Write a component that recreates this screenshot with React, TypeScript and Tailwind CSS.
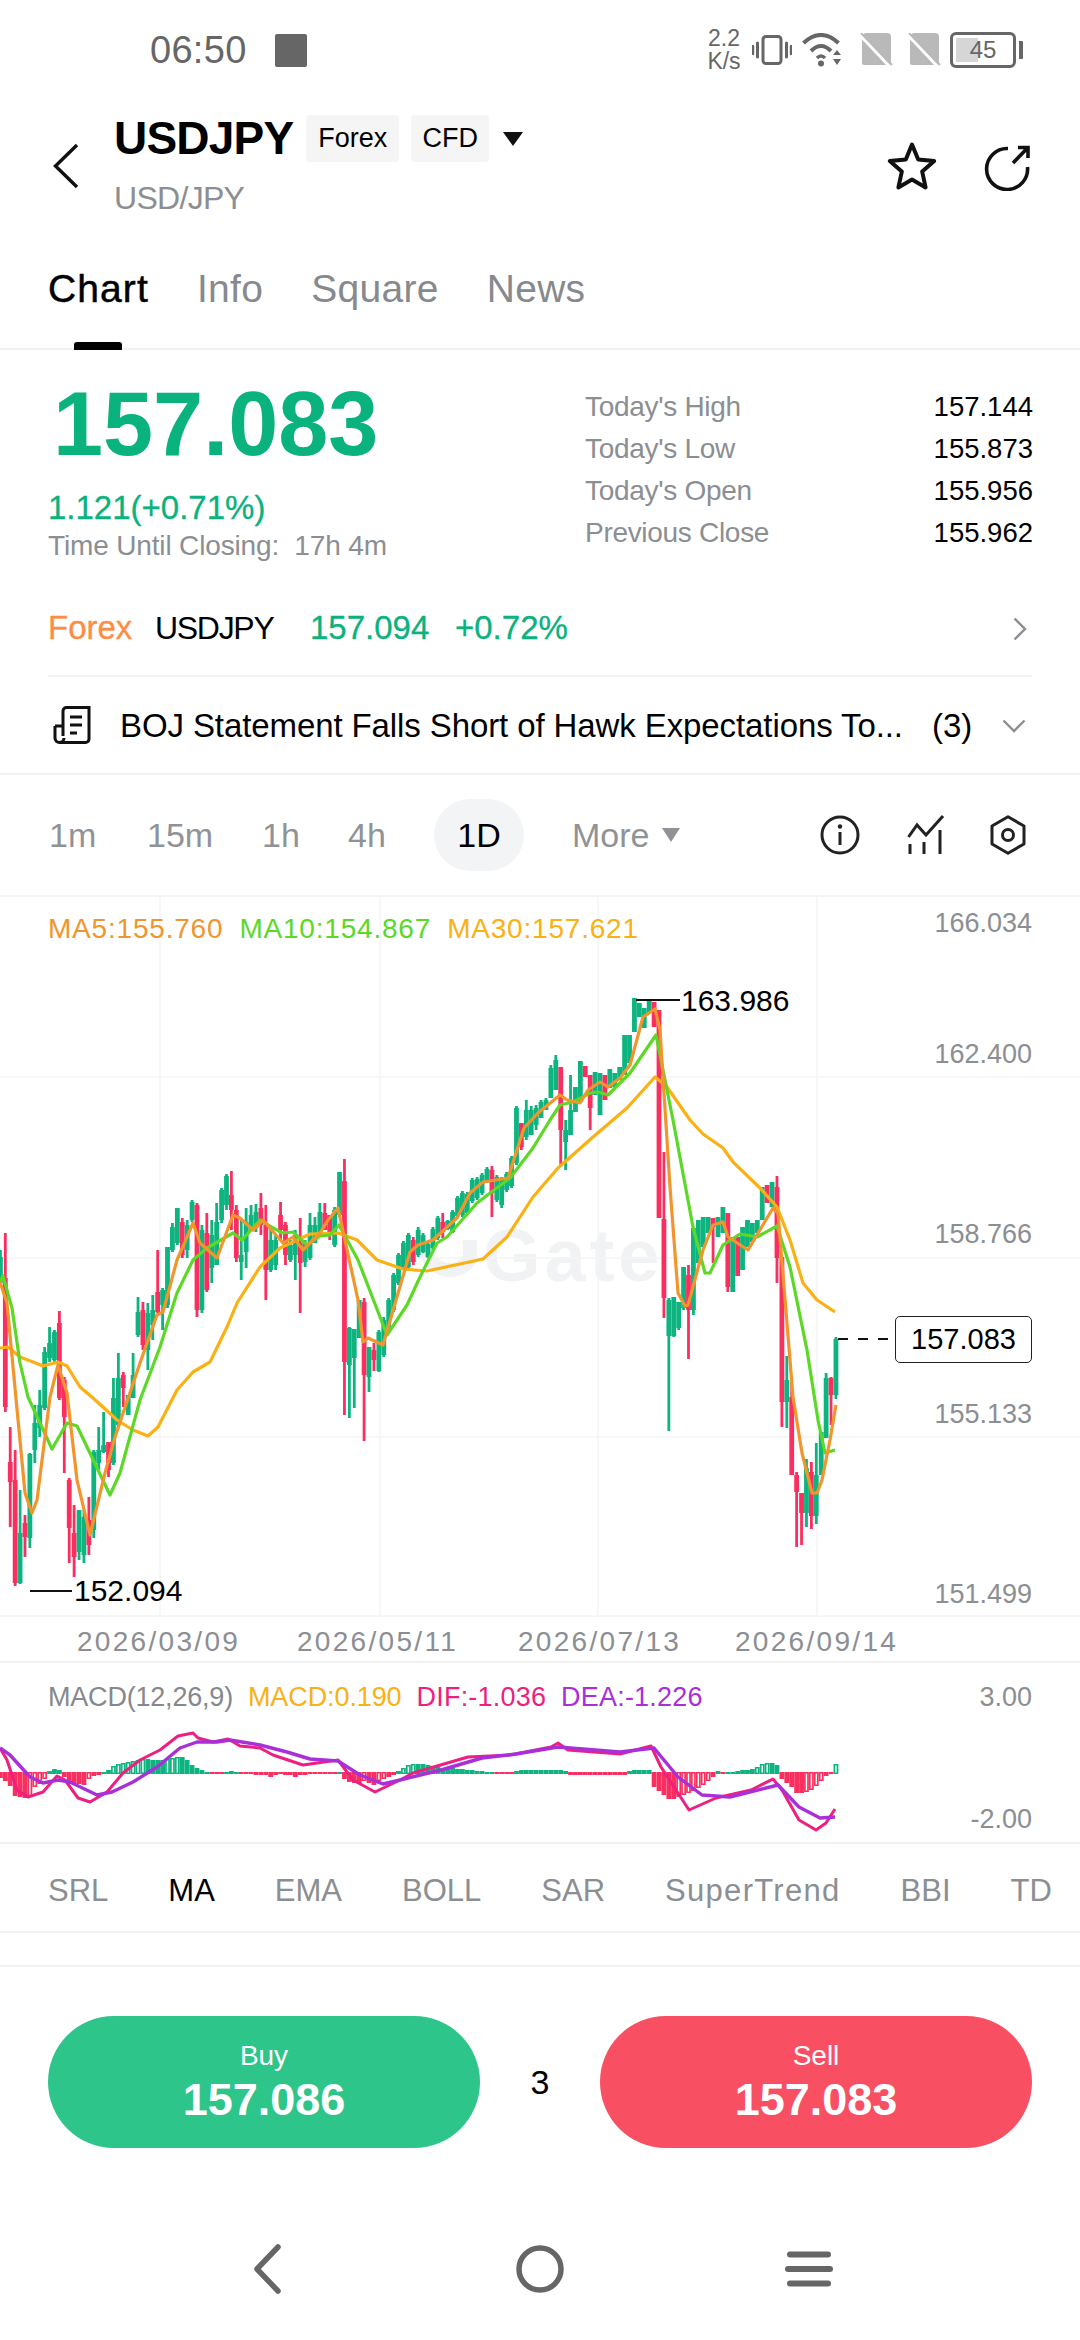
import { Fragment } from "react";

type Candle = [number, number, number, number, "g" | "r"];
type Pt = [number, number];

// traced candles: high, body top, body bottom, low, colour (page px)
const candles: Candle[] = [
  [1250, 1257, 1283, 1285, "g"], [1233, 1278, 1407, 1412, "r"], [1427, 1462, 1482, 1527, "r"], [1450, 1480, 1583, 1586, "r"],
  [1490, 1533, 1583, 1584, "g"], [1515, 1523, 1537, 1557, "r"], [1453, 1454, 1538, 1548, "g"], [1405, 1423, 1450, 1463, "g"],
  [1390, 1405, 1428, 1437, "g"], [1347, 1352, 1408, 1410, "g"], [1327, 1343, 1358, 1362, "g"], [1330, 1332, 1360, 1362, "g"],
  [1311, 1323, 1398, 1400, "r"], [1377, 1380, 1417, 1473, "r"], [1478, 1480, 1528, 1563, "r"], [1505, 1533, 1557, 1577, "r"],
  [1510, 1510, 1552, 1560, "g"], [1510, 1517, 1555, 1563, "g"], [1497, 1520, 1545, 1555, "r"], [1450, 1452, 1530, 1538, "g"],
  [1427, 1450, 1463, 1470, "g"], [1412, 1445, 1452, 1453, "g"], [1442, 1442, 1470, 1477, "r"], [1378, 1398, 1463, 1465, "g"],
  [1353, 1378, 1425, 1427, "g"], [1372, 1375, 1388, 1407, "r"], [1395, 1395, 1415, 1415, "g"], [1353, 1375, 1398, 1398, "g"],
  [1297, 1312, 1335, 1337, "g"], [1302, 1310, 1345, 1350, "r"], [1303, 1313, 1350, 1370, "g"], [1295, 1310, 1325, 1340, "g"],
  [1250, 1292, 1312, 1313, "r"], [1288, 1290, 1305, 1330, "g"], [1247, 1247, 1305, 1308, "g"], [1223, 1227, 1250, 1252, "g"],
  [1208, 1208, 1243, 1245, "g"], [1218, 1222, 1255, 1258, "r"], [1220, 1225, 1250, 1258, "g"], [1200, 1202, 1220, 1222, "g"],
  [1203, 1205, 1310, 1317, "r"], [1225, 1230, 1310, 1313, "g"], [1213, 1233, 1290, 1292, "r"], [1220, 1235, 1268, 1283, "g"],
  [1203, 1222, 1265, 1265, "g"], [1188, 1190, 1220, 1223, "g"], [1174, 1176, 1205, 1210, "g"], [1171, 1195, 1210, 1230, "r"],
  [1205, 1210, 1258, 1262, "r"], [1220, 1255, 1262, 1280, "g"], [1208, 1222, 1252, 1268, "g"], [1205, 1215, 1230, 1230, "g"],
  [1204, 1212, 1228, 1232, "g"], [1193, 1208, 1225, 1235, "r"], [1205, 1225, 1270, 1300, "r"], [1227, 1240, 1270, 1272, "g"],
  [1235, 1240, 1265, 1270, "g"], [1202, 1215, 1230, 1240, "r"], [1222, 1225, 1255, 1265, "r"], [1240, 1245, 1260, 1262, "g"],
  [1230, 1235, 1255, 1280, "g"], [1218, 1243, 1263, 1313, "r"], [1240, 1243, 1262, 1267, "g"], [1213, 1225, 1258, 1260, "g"],
  [1217, 1225, 1243, 1243, "g"], [1203, 1212, 1232, 1232, "g"], [1203, 1213, 1230, 1230, "r"], [1215, 1215, 1235, 1240, "r"],
  [1207, 1210, 1245, 1247, "g"], [1172, 1172, 1215, 1217, "g"], [1159, 1181, 1362, 1415, "r"], [1327, 1328, 1365, 1418, "g"],
  [1329, 1329, 1358, 1408, "g"], [1300, 1300, 1338, 1338, "g"], [1298, 1302, 1375, 1441, "r"], [1347, 1347, 1377, 1392, "g"],
  [1343, 1350, 1360, 1371, "r"], [1330, 1332, 1371, 1372, "g"], [1317, 1320, 1355, 1357, "g"], [1298, 1300, 1330, 1332, "g"],
  [1273, 1275, 1310, 1312, "g"], [1253, 1255, 1283, 1285, "g"], [1241, 1243, 1268, 1270, "g"], [1233, 1235, 1267, 1268, "g"],
  [1237, 1240, 1262, 1265, "r"], [1227, 1230, 1255, 1257, "g"], [1233, 1235, 1252, 1253, "g"], [1243, 1244, 1257, 1258, "g"],
  [1227, 1229, 1248, 1250, "g"], [1216, 1218, 1238, 1240, "g"], [1213, 1222, 1232, 1238, "r"], [1220, 1221, 1229, 1230, "g"],
  [1210, 1212, 1232, 1233, "g"], [1196, 1198, 1216, 1218, "g"], [1191, 1193, 1215, 1217, "g"], [1192, 1194, 1213, 1215, "g"],
  [1178, 1180, 1201, 1203, "g"], [1177, 1179, 1198, 1200, "g"], [1173, 1175, 1193, 1195, "g"], [1167, 1169, 1181, 1183, "g"],
  [1166, 1170, 1193, 1217, "r"], [1175, 1177, 1200, 1202, "g"], [1177, 1179, 1205, 1208, "g"], [1172, 1174, 1190, 1192, "g"],
  [1156, 1158, 1186, 1188, "g"], [1106, 1108, 1163, 1165, "g"], [1123, 1123, 1147, 1150, "r"], [1100, 1110, 1137, 1140, "g"],
  [1106, 1110, 1135, 1135, "g"], [1105, 1108, 1125, 1130, "g"], [1100, 1102, 1118, 1118, "g"], [1098, 1100, 1110, 1110, "g"],
  [1065, 1068, 1098, 1098, "g"], [1055, 1060, 1090, 1090, "g"], [1067, 1067, 1130, 1167, "r"], [1120, 1130, 1142, 1170, "g"],
  [1075, 1110, 1135, 1135, "g"], [1087, 1087, 1112, 1112, "g"], [1061, 1061, 1102, 1102, "g"], [1066, 1066, 1077, 1077, "r"],
  [1075, 1075, 1108, 1130, "r"], [1072, 1072, 1095, 1095, "g"], [1073, 1073, 1115, 1115, "g"], [1075, 1075, 1100, 1100, "r"],
  [1069, 1069, 1088, 1088, "g"], [1073, 1073, 1087, 1087, "g"], [1067, 1067, 1080, 1080, "g"], [1035, 1035, 1075, 1075, "g"],
  [1035, 1035, 1063, 1063, "g"], [998, 998, 1032, 1032, "g"], [1003, 1003, 1017, 1017, "g"], [1008, 1008, 1028, 1028, "g"],
  [1000, 1000, 1013, 1013, "g"], [1002, 1002, 1027, 1027, "r"], [1010, 1010, 1218, 1218, "r"], [1152, 1219, 1298, 1318, "r"],
  [1298, 1300, 1336, 1431, "g"], [1297, 1297, 1336, 1337, "g"], [1302, 1302, 1328, 1330, "g"], [1267, 1267, 1308, 1310, "g"],
  [1265, 1275, 1310, 1359, "r"], [1228, 1228, 1310, 1315, "g"], [1220, 1220, 1263, 1263, "g"], [1217, 1217, 1247, 1247, "g"],
  [1217, 1217, 1233, 1233, "g"], [1218, 1218, 1227, 1263, "r"], [1217, 1217, 1237, 1237, "g"], [1207, 1207, 1233, 1233, "g"],
  [1213, 1213, 1287, 1292, "r"], [1237, 1237, 1292, 1292, "g"], [1237, 1237, 1276, 1276, "r"], [1227, 1227, 1270, 1270, "g"],
  [1220, 1220, 1247, 1247, "g"], [1223, 1223, 1242, 1242, "g"], [1220, 1220, 1233, 1233, "g"], [1187, 1187, 1220, 1220, "g"],
  [1185, 1185, 1203, 1203, "r"], [1182, 1182, 1207, 1207, "g"], [1176, 1187, 1258, 1283, "r"], [1257, 1257, 1402, 1427, "r"],
  [1356, 1380, 1402, 1428, "g"], [1379, 1397, 1475, 1475, "r"], [1472, 1475, 1492, 1547, "r"], [1493, 1493, 1513, 1545, "r"],
  [1459, 1468, 1513, 1527, "g"], [1462, 1472, 1516, 1529, "r"], [1443, 1475, 1516, 1524, "g"], [1432, 1432, 1475, 1475, "g"],
  [1373, 1378, 1438, 1438, "g"], [1377, 1378, 1395, 1425, "r"], [1337, 1339, 1395, 1399, "g"],
];

const ma30: Pt[] = [[0,1348],[8,1347],[20,1357],[33,1362],[43,1366],[58,1362],[67,1366],[80,1387],[93,1398],[103,1407],[117,1420],[133,1430],[148,1436],[158,1427],[177,1390],[193,1372],[210,1362],[227,1327],[237,1303],[260,1267],[280,1248],[310,1234],[338,1233],[357,1240],[377,1260],[403,1269],[427,1271],[483,1259],[507,1237],[533,1197],[558,1168],[593,1137],[627,1108],[655,1077],[667,1087],[690,1120],[703,1134],[723,1148],[733,1162],[760,1188],[777,1207],[790,1240],[803,1283],[817,1300],[835,1312]];
const ma10: Pt[] = [[0,1282],[3,1276],[12,1308],[20,1363],[28,1397],[52,1449],[67,1423],[77,1426],[110,1495],[120,1473],[140,1400],[160,1347],[177,1293],[193,1260],[207,1248],[233,1233],[242,1240],[260,1220],[270,1226],[282,1233],[293,1232],[307,1245],[320,1236],[330,1235],[339,1225],[358,1260],[387,1335],[407,1305],[420,1277],[437,1243],[447,1237],[477,1203],[510,1178],[533,1148],[550,1120],[560,1105],[573,1102],[590,1093],[598,1092],[608,1095],[630,1073],[656,1035],[673,1120],[693,1227],[705,1273],[710,1273],[723,1245],[740,1234],[757,1237],[777,1226],[790,1267],[807,1350],[818,1420],[825,1453],[835,1450]];
const ma5: Pt[] = [[0,1282],[7,1303],[13,1367],[25,1493],[32,1513],[37,1500],[50,1397],[58,1365],[67,1393],[77,1480],[90,1535],[105,1473],[115,1437],[140,1363],[157,1315],[163,1312],[177,1260],[193,1223],[200,1243],[217,1258],[233,1215],[240,1218],[253,1230],[263,1220],[283,1243],[293,1237],[303,1250],[320,1233],[328,1220],[338,1208],[358,1300],[363,1342],[368,1338],[383,1345],[410,1252],[418,1245],[433,1240],[457,1218],[470,1193],[483,1182],[508,1178],[524,1128],[538,1113],[560,1095],[567,1100],[580,1103],[588,1090],[600,1082],[608,1087],[620,1078],[630,1065],[643,1017],[655,1009],[660,1030],[670,1187],[678,1293],[685,1306],[688,1305],[703,1250],[713,1225],[723,1222],[728,1237],[748,1250],[773,1208],[778,1213],[793,1397],[802,1453],[812,1493],[817,1493],[822,1480],[830,1440],[836,1405]];

const dif: Pt[] = [[0,1748],[7,1760],[17,1790],[28,1797],[43,1792],[57,1776],[65,1780],[78,1798],[90,1802],[107,1792],[123,1773],[140,1760],[160,1750],[178,1736],[193,1733],[198,1738],[213,1742],[228,1739],[240,1746],[260,1748],[273,1755],[303,1765],[338,1760],[353,1780],[375,1792],[400,1780],[413,1773],[468,1757],[510,1755],[551,1747],[558,1743],[568,1750],[620,1754],[651,1746],[661,1767],[689,1810],[716,1798],[751,1790],[773,1779],[782,1790],[799,1820],[816,1830],[826,1823],[835,1809]];
const dea: Pt[] = [[0,1748],[10,1755],[30,1777],[43,1783],[58,1780],[70,1782],[97,1795],[112,1792],[133,1782],[157,1767],[180,1748],[197,1742],[217,1742],[230,1740],[260,1745],[287,1752],[310,1759],[338,1761],[360,1775],[383,1784],[400,1780],[441,1770],[482,1758],[516,1754],[558,1747],[620,1752],[654,1748],[678,1777],[702,1795],[730,1797],[778,1785],[799,1807],[820,1818],[835,1817]];

// histogram height per candle, up is green and down is red
const hist: number[] = [-5,-8,-13,-23,-24,-25,-24,-14,-11,-6,2,4,3,-4,-11,-11,-11,-12,-6,-3,-2,1,3,7,9,10,11,12,13,14,14,13,13,13,14,15,16,16,13,8,5,3,1,-1,-1,-1,1,2,1,-1,-1,-1,-2,-2,-2,-4,-2,-1,-2,-2,-4,-2,-2,-1,-1,-1,-1,-1,-1,1,-6,-9,-10,-11,-8,-10,-12,-8,-6,-4,-2,2,5,8,9,9,9,8,7,6,5,5,5,4,4,3,3,2,2,1,1,-1,-1,-1,-1,2,3,3,3,3,3,3,3,3,3,2,-2,-2,-2,-2,-2,-2,-2,-2,-2,-2,-2,-2,2,3,3,3,3,-14,-18,-22,-26,-26,-24,-22,-20,-18,-15,-12,-8,-4,2,-1,1,1,2,3,3,4,6,9,10,10,8,-6,-10,-14,-20,-20,-19,-17,-13,-8,-3,-1,9];

const candleX = (i: number) => 0.4 + i * 4.915;
const pts = (p: Pt[]) => p.map(([x, y]) => `${x},${y}`).join(" ");

const GREEN = "#0db47f";
const RED = "#fb2f5f";

function SimOff() {
  return (
    <svg width="34" height="34" viewBox="0 0 34 34" fill="none">
      <path d="M5 0H27a4 4 0 0 1 4 4V30a2 2 0 0 1-2 2H4a2 2 0 0 1-2-2V3z" fill="#b9b9b9" />
      <path d="M1 3L30 34" stroke="#fff" strokeWidth="3" />
      <path d="M1 0L32 32" stroke="#b9b9b9" strokeWidth="2" />
    </svg>
  );
}

function StatusBar() {
  return (
    <div className="relative flex h-[100px] items-center pl-[150px] pr-[64px] text-[#666666]">
      <span className="text-[38px] leading-none tracking-[0.3px]">06:50</span>
      <div className="ml-[28px] h-[33px] w-[32px] rounded-[2px] bg-[#666666]" />
      <div className="ml-auto flex items-center">
        <div className="flex w-[46px] flex-col items-center text-[23px] leading-[23px]">
          <span>2.2</span>
          <span>K/s</span>
        </div>
        <svg className="ml-[5px]" width="40" height="30" viewBox="0 0 40 30" fill="none">
          <rect x="11" y="1.5" width="18" height="27" rx="3" stroke="#666" strokeWidth="3" />
          <path d="M5.5 8v14M34.5 8v14" stroke="#666" strokeWidth="3" strokeLinecap="round" />
          <path d="M1 11v8M39 11v8" stroke="#666" strokeWidth="2.4" strokeLinecap="round" />
        </svg>
        <svg className="ml-[10px]" width="40" height="34" viewBox="0 0 40 34" fill="none">
          <path d="M1.5 10 Q19 -6 36.5 10" stroke="#666" strokeWidth="4" />
          <path d="M9 18 Q19 8 29 18" stroke="#666" strokeWidth="4" />
          <path d="M15 25 Q19 21 23 25" stroke="#666" strokeWidth="3.5" />
          <circle cx="19" cy="30.5" r="3" fill="#666" />
          <path d="M31 22l4-5 4 5zM31 26l4 6 4-6z" fill="#666" />
        </svg>
        <div className="ml-[18px]"><SimOff /></div>
        <div className="ml-[14px]"><SimOff /></div>
        <div className="relative ml-[8px] flex h-[36px] w-[66px] items-center justify-center rounded-[6px] border-[3px] border-[#666666] text-[24px] leading-none">
          <div className="absolute bottom-[3px] left-[3px] top-[3px] w-[22px] bg-[#d6d6d6]" />
          <span className="relative">45</span>
          <div className="absolute right-[-10px] top-[6px] h-[18px] w-[4px] rounded-r-[1px] bg-[#666666]" />
        </div>
      </div>
    </div>
  );
}

function Header() {
  return (
    <div className="flex h-[150px] pl-[53px] pr-[50px]">
      <svg className="mt-[43px]" width="26" height="46" viewBox="0 0 26 46" fill="none">
        <path d="M24 2L2.5 23L24 44" stroke="#111" strokeWidth="3.4" />
      </svg>
      <div className="ml-[35px] flex flex-col">
        <div className="mt-[15px] flex items-center">
          <span className="text-[46px] font-bold leading-[47px] tracking-[-0.8px] text-black">USDJPY</span>
          <span className="ml-[13px] flex h-[47px] w-[93px] items-center justify-center rounded-[4px] bg-[#f5f5f5] text-[27px]">Forex</span>
          <span className="ml-[12px] flex h-[47px] w-[78px] items-center justify-center rounded-[4px] bg-[#f5f5f5] text-[27px]">CFD</span>
          <svg className="ml-[14px]" width="20" height="14" viewBox="0 0 20 14"><path d="M0 0h20L10 14z" fill="#111" /></svg>
        </div>
        <span className="mt-[18px] text-[32px] leading-[36px] tracking-[-0.7px] text-[#8b8e92]">USD/JPY</span>
      </div>
      <div className="ml-auto mt-[40px] flex items-start gap-[46px]">
        <svg className="ml-[2px] mt-[1px]" width="52" height="50" viewBox="0 0 52 50" fill="none">
          <path d="M26 3.5l6.2 15 16 1.5-12 10.6 3.4 15.8L26 38.6l-13.6 7.8 3.4-15.8L3.8 20l16-1.5z" stroke="#111" strokeWidth="4" strokeLinejoin="round" />
        </svg>
        <svg className="mt-[5px]" width="46" height="46" viewBox="0 0 46 46" fill="none">
          <path d="M24 3.5A20.5 20.5 0 1 0 43.5 22" stroke="#111" strokeWidth="3.6" />
          <path d="M34 2.5H44V13M44 2.5L29 18" stroke="#111" strokeWidth="3.6" />
        </svg>
      </div>
    </div>
  );
}

function Tabs() {
  return (
    <div className="relative flex h-[100px] items-start gap-[48px] border-b-2 border-[#f2f2f2] pl-[48px] pt-[17px] text-[39px] leading-[44px] tracking-[0.3px] text-[#86898d]">
      <span className="tracking-[1.1px] text-black [-webkit-text-stroke:0.5px_black]">Chart</span>
      <span>Info</span>
      <span>Square</span>
      <span>News</span>
      <div className="absolute bottom-[-2px] left-[74px] h-[8px] w-[48px] rounded-t-[3px] bg-black" />
    </div>
  );
}

const quoteRows = [
  ["Today's High", "157.144"],
  ["Today's Low", "155.873"],
  ["Today's Open", "155.956"],
  ["Previous Close", "155.962"],
];

function Quote() {
  return (
    <div className="flex h-[228px] pl-[48px] pr-[47px]">
      <div className="flex flex-col">
        <span className="ml-[5px] mt-[29px] text-[90px] font-bold leading-[90px] text-[#0ab27d]">157.083</span>
        <span className="mt-[21px] text-[33px] leading-[36px] text-[#0ab27d] [-webkit-text-stroke:0.3px_#0ab27d]">1.121(+0.71%)</span>
        <span className="mt-[2px] text-[28px] leading-[36px] tracking-[-0.15px] text-[#8b8e92]">Time Until Closing:&nbsp; 17h 4m</span>
      </div>
      <div className="ml-auto mt-[41px] flex w-[448px] flex-col gap-[10px] text-[28px] leading-[32px]">
        {quoteRows.map(([label, value]) => (
          <div key={label} className="flex justify-between">
            <span className="tracking-[-0.3px] text-[#8b8e92]">{label}</span>
            <span className="text-[27.5px] text-black">{value}</span>
          </div>
        ))}
      </div>
    </div>
  );
}

function TickerRow() {
  return (
    <div className="mx-[48px] flex h-[99px] items-center border-b-2 border-[#f4f4f4] pt-[2px] text-[33px] leading-none">
      <span className="w-[107px] text-[#ff8c42] [-webkit-text-stroke:0.3px_#ff8c42]">Forex</span>
      <span className="w-[155px] text-[32px] tracking-[-1.3px] text-black">USDJPY</span>
      <span className="w-[145px] text-[#0ab27d] [-webkit-text-stroke:0.3px_#0ab27d]">157.094</span>
      <span className="text-[#0ab27d] [-webkit-text-stroke:0.3px_#0ab27d]">+0.72%</span>
      <svg className="ml-auto mr-[5px] mt-[2px]" width="14" height="24" viewBox="0 0 14 24" fill="none">
        <path d="M1.5 1.5L12 12L1.5 22.5" stroke="#8b8e92" strokeWidth="2.4" />
      </svg>
    </div>
  );
}

function NewsRow() {
  return (
    <div className="flex h-[98px] items-center border-b-2 border-[#f2f2f2] pl-[53px] pr-[54px] text-[33px] leading-none text-black">
      <svg width="38" height="38" viewBox="0 0 38 38" fill="none">
        <path d="M10 30V5a3.5 3.5 0 0 1 3.5-3.5H36V33a3.5 3.5 0 0 1-3.5 3.5H6.5" stroke="#111" strokeWidth="3" />
        <path d="M2 20H10M2 20V32a4.5 4.5 0 0 0 9 0" stroke="#111" strokeWidth="3" />
        <path d="M17 11H29M17 19H29M17 27H24" stroke="#111" strokeWidth="3" />
      </svg>
      <span className="ml-[29px] w-[812px] whitespace-nowrap tracking-[-0.1px]">BOJ Statement Falls Short of Hawk Expectations To...</span>
      <span>(3)</span>
      <svg className="ml-auto mt-[2px]" width="24" height="14" viewBox="0 0 24 14" fill="none">
        <path d="M1.5 1.5L12 12L22.5 1.5" stroke="#8b8e92" strokeWidth="2.4" />
      </svg>
    </div>
  );
}

function Timeframes() {
  return (
    <div className="flex h-[122px] items-center border-b-2 border-[#f4f4f4] pl-[49px] pr-[54px] text-[34px] leading-none text-[#8f9296]">
      <span className="w-[98px]">1m</span>
      <span className="w-[115px]">15m</span>
      <span className="w-[86px]">1h</span>
      <span className="w-[86px]">4h</span>
      <span className="flex h-[72px] w-[90px] items-center justify-center rounded-full bg-[#f3f4f6] text-black">1D</span>
      <span className="ml-[48px]">More</span>
      <svg className="ml-[13px]" width="18" height="14" viewBox="0 0 18 14"><path d="M0 0h18L9 14z" fill="#8f9296" /></svg>
      <svg className="ml-auto" width="40" height="40" viewBox="0 0 40 40" fill="none">
        <circle cx="20" cy="20" r="18" stroke="#222" strokeWidth="3" />
        <path d="M20 17V30" stroke="#222" strokeWidth="3" />
        <circle cx="20" cy="11.5" r="2.2" fill="#222" />
      </svg>
      <svg className="ml-[47px]" width="38" height="40" viewBox="0 0 38 40" fill="none">
        <path d="M1.5 22L10 10L19 20L36 1" stroke="#222" strokeWidth="3" />
        <path d="M3 29V39M17 27V39M33 15V39" stroke="#222" strokeWidth="3" />
      </svg>
      <svg className="ml-[45px]" width="36" height="40" viewBox="0 0 36 40" fill="none">
        <path d="M18 1.8L34 11V29L18 38.2L2 29V11z" stroke="#222" strokeWidth="3" strokeLinejoin="round" />
        <circle cx="18" cy="20" r="5.5" stroke="#222" strokeWidth="3" />
      </svg>
    </div>
  );
}

const yLabels = [
  ["166.034", "top-[10px]"],
  ["162.400", "top-[141px]"],
  ["158.766", "top-[321px]"],
  ["155.133", "top-[501px]"],
  ["151.499", "top-[681px]"],
];

const dateLabels = [
  ["2026/03/09", "left-[77px]"],
  ["2026/05/11", "left-[297px]"],
  ["2026/07/13", "left-[518px]"],
  ["2026/09/14", "left-[735px]"],
];

function PriceChart() {
  return (
    <div className="relative h-[766px] border-b-2 border-[#f2f2f2]">
      <svg className="absolute inset-0" width="1080" height="766" viewBox="0 897 1080 766" fill="none">
        {[1077, 1258, 1437, 1616].map((y) => (
          <path key={y} d={`M0 ${y}H1080`} stroke="#f3f4f5" strokeWidth="1.5" />
        ))}
        {[160, 380, 598, 817].map((x) => (
          <path key={x} d={`M${x} 897V1616`} stroke="#f3f4f5" strokeWidth="1.5" />
        ))}
        {/* watermark logo */}
        <path d="M426 1243a24 24 0 0 0 44 16V1240" stroke="#f1f2f4" strokeWidth="14" />
        {candles.map(([hi, top, bot, lo, c], i) => {
          const x = candleX(i);
          const col = c === "g" ? GREEN : RED;
          return (
            <Fragment key={i}>
              <rect x={x - 1.4} y={hi} width="2.8" height={lo - hi} fill={col} />
              <rect x={x - 2.4} y={top} width="4.8" height={Math.max(bot - top, 1)} fill={col} />
            </Fragment>
          );
        })}
        <polyline points={pts(ma30)} stroke="#fbb013" strokeWidth="3.2" strokeLinejoin="round" />
        <polyline points={pts(ma10)} stroke="#5cd827" strokeWidth="3.2" strokeLinejoin="round" />
        <polyline points={pts(ma5)} stroke="#f2952c" strokeWidth="3.2" strokeLinejoin="round" />
        <path d="M636 1000H680M30 1591H72" stroke="#111" strokeWidth="2" />
        <path d="M838 1339H895" stroke="#111" strokeWidth="2" strokeDasharray="10 10" />
      </svg>
      <span className="absolute left-[483px] top-[319px] z-[-1] text-[74px] font-bold leading-[80px] tracking-[4px] text-[#f1f2f4]">Gate</span>
      <div className="absolute left-[48px] top-[16px] flex gap-[16px] text-[28px] leading-[32px] tracking-[0.8px]">
        <span className="text-[#f2952c]">MA5:155.760</span>
        <span className="text-[#5cd827]">MA10:154.867</span>
        <span className="text-[#fbb013]">MA30:157.621</span>
      </div>
      {yLabels.map(([t, top]) => (
        <span key={t} className={`absolute right-[48px] text-[27px] leading-[32px] text-[#8b8e92] ${top}`}>{t}</span>
      ))}
      {dateLabels.map(([t, left]) => (
        <span key={t} className={`absolute top-[729px] text-[28px] leading-[32px] tracking-[2.3px] text-[#8b8e92] ${left}`}>{t}</span>
      ))}
      <span className="absolute left-[681px] top-[88px] text-[30px] leading-[32px] text-black">163.986</span>
      <span className="absolute left-[74px] top-[678px] text-[30px] leading-[32px] text-black">152.094</span>
      <span className="absolute left-[895px] top-[419px] flex h-[47px] w-[137px] items-center justify-center rounded-[5px] border border-[#222] bg-white text-[29px] leading-none text-black">157.083</span>
    </div>
  );
}

function Macd() {
  return (
    <div className="relative h-[181px] border-b-2 border-[#f2f2f2]">
      <svg className="absolute inset-0" width="1080" height="181" viewBox="0 1663 1080 181" fill="none">
        {hist.map((v, i) => {
          const x = candleX(i);
          const col = v > 0 ? GREEN : RED;
          const y = v > 0 ? 1773 - v : 1772;
          const h = Math.abs(v) + 1;
          const hollow = i > 0 && v > hist[i - 1] && Math.abs(v) > 4;
          return (
            <Fragment key={i}>
              <rect x={x - 2.4} y={y} width="4.8" height={h} fill={col} />
              {hollow && <rect x={x - 0.7} y={y + 1.5} width="1.4" height={h - 3} fill="#fff" />}
            </Fragment>
          );
        })}
        <polyline points={pts(dif)} stroke="#ee1f80" strokeWidth="3" strokeLinejoin="round" />
        <polyline points={pts(dea)} stroke="#a92fd9" strokeWidth="3.4" strokeLinejoin="round" />
      </svg>
      <div className="absolute left-[48px] top-[18px] flex gap-[15px] text-[27px] leading-[32px] tracking-[-0.2px]">
        <span className="text-[#85888c]">MACD(12,26,9)</span>
        <span className="tracking-[-0.1px] text-[#fbb013]">MACD:0.190</span>
        <span className="tracking-[0.2px] text-[#ee1f80]">DIF:-1.036</span>
        <span className="tracking-[0.2px] text-[#a92fd9]">DEA:-1.226</span>
      </div>
      <span className="absolute right-[48px] top-[18px] text-[27px] leading-[32px] text-[#8b8e92]">3.00</span>
      <span className="absolute right-[48px] top-[140px] text-[27px] leading-[32px] text-[#8b8e92]">-2.00</span>
    </div>
  );
}

const indicators = ["SRL", "MA", "EMA", "BOLL", "SAR", "SuperTrend", "BBI", "TD"];

function Indicators() {
  return (
    <div className="flex h-[89px] items-center gap-[60px] overflow-hidden border-b-2 border-[#f2f2f2] pl-[48px] pt-[6px] text-[31px] leading-none text-[#8b8e92]">
      {indicators.map((name) => (
        <span key={name} className={name === "MA" ? "text-black" : name === "SuperTrend" ? "tracking-[1.3px]" : ""}>{name}</span>
      ))}
    </div>
  );
}

function Actions() {
  return (
    <div className="flex items-center px-[48px] pt-[49px] text-white">
      <div className="flex h-[132px] w-[432px] flex-col items-center justify-center rounded-full bg-[#2dc58a]">
        <span className="text-[28px] leading-[34px]">Buy</span>
        <span className="mt-[2px] text-[45px] font-bold leading-[50px]">157.086</span>
      </div>
      <span className="flex-1 text-center text-[34px] text-black">3</span>
      <div className="flex h-[132px] w-[432px] flex-col items-center justify-center rounded-full bg-[#f94f62]">
        <span className="text-[28px] leading-[34px]">Sell</span>
        <span className="mt-[2px] text-[45px] font-bold leading-[50px]">157.083</span>
      </div>
    </div>
  );
}

function NavBar() {
  return (
    <div className="mt-[96px] flex items-center pl-[252px]">
      <svg width="30" height="50" viewBox="0 0 30 50" fill="none">
        <path d="M26 3L5 25L26 47" stroke="#666" strokeWidth="5.5" strokeLinecap="round" strokeLinejoin="round" />
      </svg>
      <svg className="ml-[234px]" width="48" height="48" viewBox="0 0 48 48" fill="none">
        <circle cx="24" cy="24" r="21" stroke="#666" strokeWidth="5.5" />
      </svg>
      <svg className="ml-[221px]" width="48" height="36" viewBox="0 0 48 36" fill="none">
        <path d="M5 3.5H43M3 18H45M5 32.5H43" stroke="#666" strokeWidth="6" strokeLinecap="round" />
      </svg>
    </div>
  );
}

export default function App() {
  return (
    <div className="relative isolate h-[2340px] w-[1080px] overflow-hidden bg-white font-['Liberation_Sans',Arial,sans-serif]">
      <StatusBar />
      <Header />
      <Tabs />
      <Quote />
      <TickerRow />
      <NewsRow />
      <Timeframes />
      <PriceChart />
      <Macd />
      <Indicators />
      <div className="h-[34px] border-b-2 border-[#f2f2f2]" />
      <Actions />
      <NavBar />
    </div>
  );
}
